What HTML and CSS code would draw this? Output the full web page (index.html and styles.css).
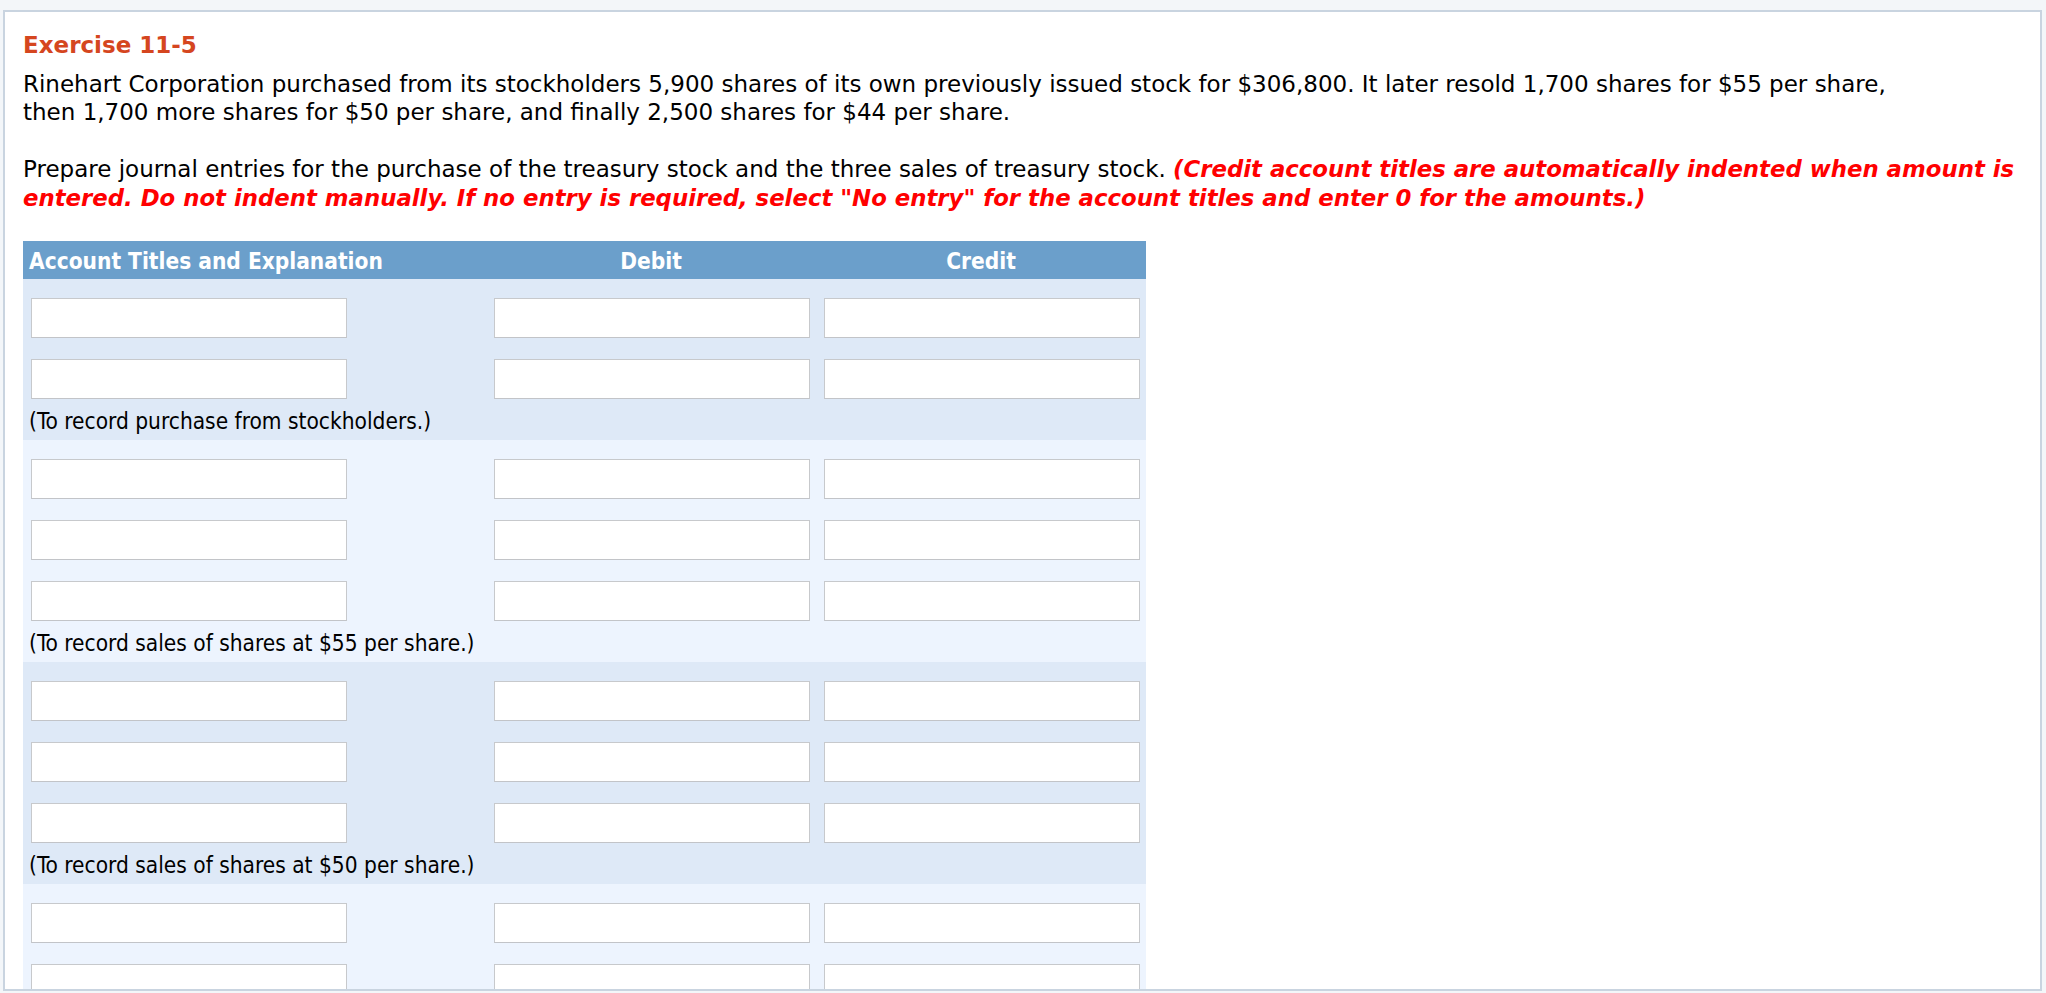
FILE: index.html
```html
<!DOCTYPE html>
<html lang="en">
    <head>
        <meta charset="UTF-8" />
        <meta name="viewport" content="width=device-width, initial-scale=1.0" />
        <title>Exercise 11-5</title>
        <link rel="stylesheet" href="styles.css">
    </head>
    <body>
        <div class="frame">
            <h2 class="exercise-title">Exercise 11-5</h2>
            <p class="problem">
                Rinehart Corporation purchased from its stockholders 5,900 shares of its own previously issued stock for $306,800. It later resold 1,700 shares for $55 per share,<br>
                then 1,700 more shares for $50 per share, and finally 2,500 shares for $44 per share.
            </p>
            <p class="problem">
                Prepare journal entries for the purchase of the treasury stock and the three sales of treasury stock.
                <span class="hint">(Credit account titles are automatically indented when amount is<br>
                entered. Do not indent manually. If no entry is required, select "No entry" for the account titles and enter 0 for the amounts.)</span>
            </p>

            <div class="journal">
                <div class="journal-head">
                    <div class="col-title">Account Titles and Explanation</div>
                    <div class="col-amount">Debit</div>
                    <div class="col-amount">Credit</div>
                </div>

                <div class="entry">
                    <div class="line"><input type="text" /><input type="text" /><input type="text" /></div>
                    <div class="line"><input type="text" /><input type="text" /><input type="text" /></div>
                    <p class="note">(To record purchase from stockholders.)</p>
                </div>

                <div class="entry">
                    <div class="line"><input type="text" /><input type="text" /><input type="text" /></div>
                    <div class="line"><input type="text" /><input type="text" /><input type="text" /></div>
                    <div class="line"><input type="text" /><input type="text" /><input type="text" /></div>
                    <p class="note">(To record sales of shares at $55 per share.)</p>
                </div>

                <div class="entry">
                    <div class="line"><input type="text" /><input type="text" /><input type="text" /></div>
                    <div class="line"><input type="text" /><input type="text" /><input type="text" /></div>
                    <div class="line"><input type="text" /><input type="text" /><input type="text" /></div>
                    <p class="note">(To record sales of shares at $50 per share.)</p>
                </div>

                <div class="entry">
                    <div class="line"><input type="text" /><input type="text" /><input type="text" /></div>
                    <div class="line"><input type="text" /><input type="text" /><input type="text" /></div>
                    <div class="line"><input type="text" /><input type="text" /><input type="text" /></div>
                    <p class="note">(To record sales of shares at $44 per share.)</p>
                </div>
            </div>
        </div>
    </body>
</html>
```

FILE: styles.css
```css
* {
    margin: 0;
    padding: 0;
    box-sizing: border-box;
}
body {
    background-color: #f3f6f9;
    padding: 10px 4px 0 3px;
    height: 100vh;
    overflow: hidden;
    font-family: "DejaVu Sans", Verdana, sans-serif;
    font-size: 23px;
    color: #000;
}
.frame {
    height: 981px;
    overflow: hidden;
    background-color: #fff;
    border: 2px solid #c9d4e0;
    padding: 19px 18px 0 18px;
}
.exercise-title {
    font-size: 23px;
    line-height: 28.5px;
    font-weight: bold;
    color: #d5461f;
    margin-bottom: 10px;
}
.problem {
    line-height: 28.5px;
    margin-bottom: 28.5px;
}
.hint {
    color: #ff0000;
    font-weight: bold;
    font-style: italic;
    font-size: 22.8px;
}

/* journal entry table */
.journal {
    width: 1123px;
    margin-top: 28px;
    font-family: "DejaVu Sans Condensed", "DejaVu Sans", sans-serif;
    font-stretch: condensed;
    font-size: 22.5px;
}
.journal-head,
.journal .line {
    display: grid;
    grid-template-columns: 463px 330px 330px;
}
.journal-head {
    background-color: #6b9fcb;
    color: #fff;
    font-weight: bold;
    height: 38px;
    line-height: 36px;
    padding-top: 2px;
}
.journal-head .col-title {
    padding-left: 6px;
}
.journal-head .col-amount {
    text-align: center;
}
.entry {
    padding-top: 19px;
    background-color: #dee9f7;
}
.entry:nth-child(odd) {
    background-color: #edf4fe;
}
.entry .line + .line {
    margin-top: 21px;
}
.entry input[type="text"] {
    width: 316px;
    height: 40px;
    margin-left: 8px;
    background-color: #fff;
    border: 1px solid #c7c9cc;
    border-bottom-color: #c2c4c8;
    font: inherit;
    padding: 0 6px;
}
.entry .note {
    margin-top: 8px;
    line-height: 28px;
    padding: 0 6px 5px;
}
```
